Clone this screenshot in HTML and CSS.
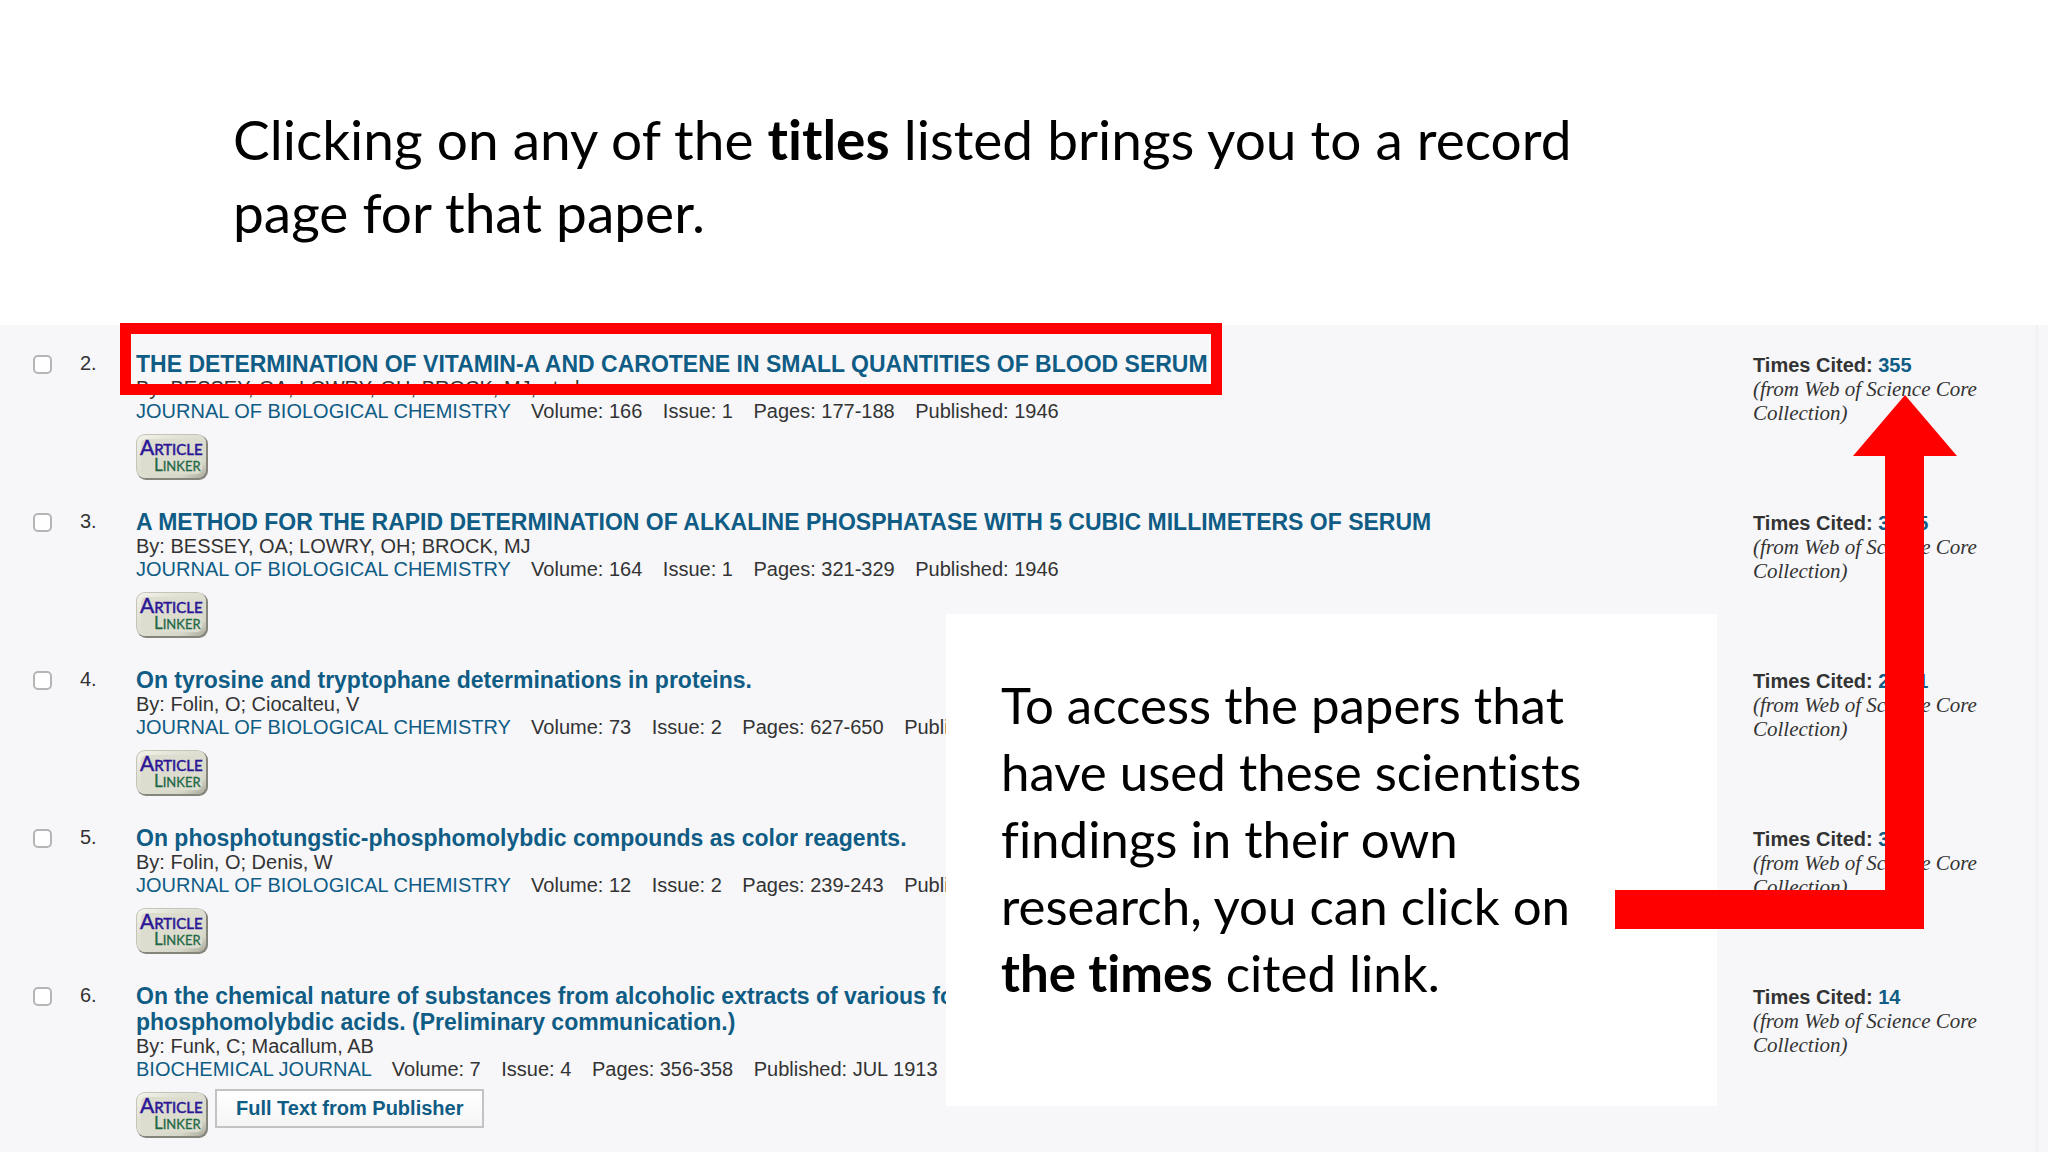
FILE: index.html
```html
<!DOCTYPE html>
<html lang="en">
<head>
    <meta charset="UTF-8">
    <meta name="viewport" content="width=device-width, initial-scale=1.0">
    <title>Times Cited</title>
    <link rel="stylesheet" href="styles.css">
</head>
<body>
    <!-- shared "Article Linker" badge -->
    <svg class="defs" width="0" height="0" aria-hidden="true">
        <defs>
            <linearGradient id="badge-fill" x1="0" y1="0" x2="1" y2="1">
                <stop offset="0" stop-color="#f4f4ec"/>
                <stop offset="0.3" stop-color="#e2e2d6"/>
                <stop offset="0.8" stop-color="#d6d6c9"/>
                <stop offset="1" stop-color="#a5a598"/>
            </linearGradient>
            <symbol id="linker" viewBox="0 0 72 46">
                <rect x="1" y="1" width="71" height="45" rx="9" fill="#85857c"/>
                <rect x="0" y="0" width="70" height="44" rx="9" fill="#c4c4b8"/>
                <rect x="1" y="1" width="69" height="43" rx="8" fill="url(#badge-fill)"/>
                <rect x="5" y="5" width="61" height="35" rx="5" fill="#dcdccf"/>
                <text x="4" y="21" font-size="21" fill="#2b1596" stroke="#2b1596" stroke-width="0.5">A<tspan font-size="15">RTICLE</tspan></text>
                <text x="18" y="37" font-size="17" fill="#1f6845" stroke="#1f6845" stroke-width="0.3">L<tspan font-size="13">INKER</tspan></text>
            </symbol>
        </defs>
    </svg>

    <header class="intro">
        <h1>Clicking on any of the <strong>titles</strong> listed brings you to a record page for that paper.</h1>
    </header>

    <main class="results">
        <ol class="records">
            <li class="record">
                <input type="checkbox" id="rec2">
                <label for="rec2">2.</label>
                <div class="info">
                    <a class="title" href="#">THE DETERMINATION OF VITAMIN-A AND CAROTENE IN SMALL QUANTITIES OF BLOOD SERUM</a>
                    <p>By: BESSEY, OA; LOWRY, OH; BROCK, MJ; et al.</p>
                    <p class="source"><a href="#">JOURNAL OF BIOLOGICAL CHEMISTRY</a> <span>Volume: 166</span> <span>Issue: 1</span> <span>Pages: 177-188</span> <span>Published: 1946</span></p>
                    <div class="links"><a href="#" aria-label="Article Linker"><svg class="linker"><use href="#linker"/></svg></a></div>
                </div>
                <div class="cited">
                    <strong>Times Cited: <a href="#">355</a></strong>
                    <em>(from Web of Science Core Collection)</em>
                </div>
            </li>
            <li class="record">
                <input type="checkbox" id="rec3">
                <label for="rec3">3.</label>
                <div class="info">
                    <a class="title" href="#">A METHOD FOR THE RAPID DETERMINATION OF ALKALINE PHOSPHATASE WITH 5 CUBIC MILLIMETERS OF SERUM</a>
                    <p>By: BESSEY, OA; LOWRY, OH; BROCK, MJ</p>
                    <p class="source"><a href="#">JOURNAL OF BIOLOGICAL CHEMISTRY</a> <span>Volume: 164</span> <span>Issue: 1</span> <span>Pages: 321-329</span> <span>Published: 1946</span></p>
                    <div class="links"><a href="#" aria-label="Article Linker"><svg class="linker"><use href="#linker"/></svg></a></div>
                </div>
                <div class="cited">
                    <strong>Times Cited: <a href="#">3,345</a></strong>
                    <em>(from Web of Science Core Collection)</em>
                </div>
            </li>
            <li class="record">
                <input type="checkbox" id="rec4">
                <label for="rec4">4.</label>
                <div class="info">
                    <a class="title" href="#">On tyrosine and tryptophane determinations in proteins.</a>
                    <p>By: Folin, O; Ciocalteu, V</p>
                    <p class="source"><a href="#">JOURNAL OF BIOLOGICAL CHEMISTRY</a> <span>Volume: 73</span> <span>Issue: 2</span> <span>Pages: 627-650</span> <span>Published: 1927</span></p>
                    <div class="links"><a href="#" aria-label="Article Linker"><svg class="linker"><use href="#linker"/></svg></a></div>
                </div>
                <div class="cited">
                    <strong>Times Cited: <a href="#">2,741</a></strong>
                    <em>(from Web of Science Core Collection)</em>
                </div>
            </li>
            <li class="record">
                <input type="checkbox" id="rec5">
                <label for="rec5">5.</label>
                <div class="info">
                    <a class="title" href="#">On phosphotungstic-phosphomolybdic compounds as color reagents.</a>
                    <p>By: Folin, O; Denis, W</p>
                    <p class="source"><a href="#">JOURNAL OF BIOLOGICAL CHEMISTRY</a> <span>Volume: 12</span> <span>Issue: 2</span> <span>Pages: 239-243</span> <span>Published: 1912</span></p>
                    <div class="links"><a href="#" aria-label="Article Linker"><svg class="linker"><use href="#linker"/></svg></a></div>
                </div>
                <div class="cited">
                    <strong>Times Cited: <a href="#">334</a></strong>
                    <em>(from Web of Science Core Collection)</em>
                </div>
            </li>
            <li class="record">
                <input type="checkbox" id="rec6">
                <label for="rec6">6.</label>
                <div class="info">
                    <a class="title" href="#">On the chemical nature of substances from alcoholic extracts of various foodstuffs which give a color reaction with phosphotungstic and phosphomolybdic acids. (Preliminary communication.)</a>
                    <p>By: Funk, C; Macallum, AB</p>
                    <p class="source"><a href="#">BIOCHEMICAL JOURNAL</a> <span>Volume: 7</span> <span>Issue: 4</span> <span>Pages: 356-358</span> <span>Published: JUL 1913</span></p>
                    <div class="links">
                        <a href="#" aria-label="Article Linker"><svg class="linker"><use href="#linker"/></svg></a>
                        <button type="button" class="fulltext">Full Text from Publisher</button>
                    </div>
                </div>
                <div class="cited">
                    <strong>Times Cited: <a href="#">14</a></strong>
                    <em>(from Web of Science Core Collection)</em>
                </div>
            </li>
        </ol>

        <!-- annotations over the list -->
        <div class="highlight"></div>
        <aside class="callout">To access the papers that have used these scientists findings in their own research, you can click on <strong>the times</strong> cited link.</aside>
        <svg class="arrow" viewBox="0 0 342 534" aria-hidden="true">
            <path d="M290 0 L342 61 H309 V534 H0 V495 H270 V61 H238 Z" fill="#ff0000"/>
        </svg>
    </main>
</body>
</html>
```
FILE: styles.css
```css
* {
    box-sizing: border-box;
}

body {
    margin: 0;
    min-height: 100vh;
    display: flex;
    flex-direction: column;
    background-color: #fff;
    color: #333;
    font-family: "Liberation Sans", Arial, sans-serif;
    font-size: 20px;
    line-height: 24px;
    overflow: hidden;
}

a {
    color: #0f5c85;
    text-decoration: none;
}

p {
    margin: 0;
    line-height: 23px;
}

.defs {
    position: absolute;
}

.intro {
    padding: 103px 400px 76px 233px;
}

.intro h1 {
    margin: 0;
    max-width: 1400px;
    color: #000;
    font-family: Lato, sans-serif;
    font-size: 55px;
    font-weight: 400;
    font-variant-ligatures: none;
    line-height: 73px;
}

.intro strong {
    font-weight: 700;
}

.results {
    position: relative;
    flex: 1;
    margin-right: 10px;
    padding: 26px 0 0 33px;
    background-color: #f7f7f9;
    border-right: 2px solid #f1f1f4;
    box-shadow: 10px 0 #f7f7f9;
}

.records {
    margin: 0;
    padding: 0;
    list-style: none;
    display: flex;
    flex-direction: column;
    gap: 29px;
}

.record {
    display: grid;
    grid-template-columns: 47px 56px 1fr 283px;
    align-items: start;
}

.record input {
    appearance: none;
    width: 19px;
    height: 19px;
    margin: 4px 0 0;
    background-color: #fff;
    border: 2px solid #b5b5b7;
    border-radius: 5px;
}

.info {
    padding-right: 40px;
}

.title {
    display: block;
    font-size: 23px;
    font-weight: 700;
    line-height: 26px;
}

.source span {
    margin-left: 15px;
}

.links {
    display: flex;
    gap: 7px;
    margin-top: 11px;
}

.links a {
    display: flex;
}

.linker {
    width: 72px;
    height: 46px;
    font-family: Lato, sans-serif;
}

.fulltext {
    height: 39px;
    margin-top: -3px;
    padding: 0 19px;
    border: 2px solid #c3c3c5;
    background: linear-gradient(#fff, #f5f5f6);
    color: #0f5c85;
    font-family: inherit;
    font-size: 20px;
    font-weight: 700;
}

.cited {
    padding-top: 2px;
}

.cited strong,
.cited em {
    display: block;
}

.cited em {
    max-width: 240px;
    font-family: "Liberation Serif", Georgia, serif;
    font-size: 21px;
}

.highlight {
    position: absolute;
    top: -2px;
    left: 120px;
    width: 1102px;
    height: 72px;
    border: 11px solid #ff0000;
}

.callout {
    position: absolute;
    top: 289px;
    right: 319px;
    width: 771px;
    height: 492px;
    padding: 57px 110px 57px 55px;
    background-color: #fff;
    color: #000;
    font-family: Lato, sans-serif;
    font-size: 51px;
    font-variant-ligatures: none;
    line-height: 67px;
}

.arrow {
    position: absolute;
    top: 70px;
    right: 79px;
    width: 342px;
    height: 534px;
}
```
